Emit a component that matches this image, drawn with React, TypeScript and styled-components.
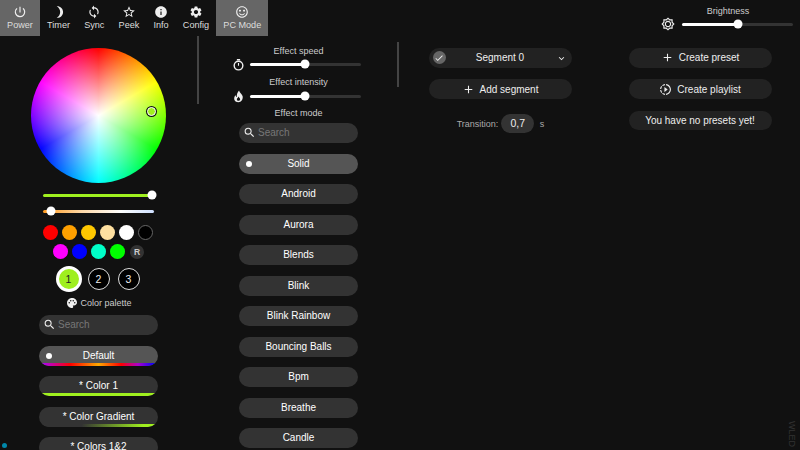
import React from "react";
import styled, { createGlobalStyle } from "styled-components";
import {
  MdPowerSettingsNew, MdStarBorder, MdInfo, MdSettings, MdSentimentSatisfiedAlt, MdOutlineBrightness5,
  MdSearch, MdPalette, MdAdd, MdSlowMotionVideo,
  MdCheck, MdExpandMore, MdSync,
} from "react-icons/md";

const Global = createGlobalStyle`
  html, body { margin: 0; padding: 0; background: #111; }
  body { font-family: "Liberation Sans", Arial, sans-serif; color: #fff; width: 800px; height: 450px; overflow: hidden; }
`;

const Page = styled.div`
  width: 800px; height: 450px; background: #111; overflow: hidden; position: relative;
  display: flex; flex-direction: column;
`;
const TopBar = styled.header`
  height: 36px; flex: none; display: flex; justify-content: space-between;
`;
const Nav = styled.nav`display: flex;`;
const NavButton = styled.button<{ $active?: boolean }>`
  border: 0; margin: 0; padding: 5px 7.1px 0; height: 36px; background: ${p => (p.$active ? "#666" : "transparent")};
  color: #ddd; font: 9.1px "Liberation Sans", Arial, sans-serif;
  display: flex; flex-direction: column; align-items: center; justify-content: flex-start; gap: 1px;
  svg { display: block; width: 14px; height: 14px; color: #eee; }
`;
const BrightnessBox = styled.div`
  width: 132px; margin-right: 7px; padding-top: 5px; display: flex; flex-direction: column; align-items: center;
`;
const Label = styled.div`
  font-size: 9px; line-height: 12px; height: 12px; color: #ccc; text-align: center;
`;
const BrightnessLabel = styled(Label)`margin-left: 2px;`;
const BrightnessRow = styled.div`
  display: flex; align-items: center; margin-top: 2px; height: 10px; width: 132px; justify-content: space-between;
  svg { width: 14px; height: 14px; color: #eee; }
`;
const Track = styled.div<{ $w?: number }>`
  position: relative; width: ${p => p.$w ?? 111}px; height: 3px; border-radius: 2px; background: #333; flex: none;
`;
const Fill = styled.div`
  position: absolute; left: 0; top: 0; bottom: 0; background: #fff; border-radius: 2px;
`;
const Knob = styled.div<{ $d?: number }>`
  position: absolute; top: 50%; width: ${p => p.$d ?? 9}px; height: ${p => p.$d ?? 9}px; border-radius: 50%;
  background: #fff; transform: translate(-50%, -50%);
`;
const Main = styled.main`
  flex: 1; display: grid; grid-template-columns: 197px 203px 200px 200px; min-height: 0;
`;
const Column = styled.section`
  position: relative; display: flex; flex-direction: column; align-items: center; min-height: 0;
`;
const Divider = styled.div<{ $top: number; $h: number; $right: number }>`
  position: absolute; right: ${p => p.$right}px; top: ${p => p.$top}px; height: ${p => p.$h}px; width: 2px; background: #444;
`;
const WheelBox = styled.div`
  margin-top: 11.5px; width: 135px; height: 135px; border-radius: 50%; position: relative; flex: none;
  background:
    radial-gradient(closest-side, #fff, rgba(255,255,255,0)),
    conic-gradient(#f00, #ff0 60deg, #0f0 120deg, #0ff 180deg, #00f 240deg, #f0f 300deg, #f00);
`;
const WheelKnob = styled.div`
  position: absolute; left: 115.5px; top: 59px; width: 7px; height: 7px; border-radius: 50%;
  background: #a0f01f; border: 1px solid #fff; box-shadow: 0 0 0 1px #111;
`;
const ColorSlider = styled.div<{ $mt: number }>`
  margin-top: ${p => p.$mt}px; height: 10px; display: flex; align-items: center; flex: none; margin-left: -1px;
`;
const HueTrack = styled(Track)`background: #a0f01f;`;
const TempTrack = styled(Track)`background: linear-gradient(90deg, #ff9a1e, #ffd9a8 35%, #fff 70%, #cfe0ff);`;
const DotRow = styled.div<{ $mt: number; $shift?: number }>`
  margin-top: ${p => p.$mt}px; margin-left: ${p => p.$shift ?? 0}px; display: flex; gap: 4px; align-items: center; flex: none;
`;
const Dot = styled.div<{ $c: string; $outlined?: boolean }>`
  width: 15px; height: 15px; box-sizing: border-box; border-radius: 50%; background: ${p => p.$c};
  border: ${p => (p.$outlined ? "1px solid #666" : "0")};
`;
const ResetDot = styled.div`
  width: 14px; height: 14px; border-radius: 50%; background: #333; color: #ccc; font-size: 8.5px; font-weight: bold;
  display: flex; align-items: center; justify-content: center; margin-left: 1px;
`;
const SlotRow = styled.div`
  margin-top: 7px; height: 26px; display: flex; align-items: center; gap: 8px; flex: none;
`;
const Slot = styled.div<{ $active?: boolean }>`
  box-sizing: border-box; border-radius: 50%; display: flex; align-items: center; justify-content: center;
  width: ${p => (p.$active ? 26 : 22)}px; height: ${p => (p.$active ? 26 : 22)}px;
  margin: 0 ${p => (p.$active ? -2 : 0)}px;
  border: ${p => (p.$active ? "3px solid #fff" : "1px solid #ddd")};
  background: ${p => (p.$active ? "#9fef1f" : "#000")}; color: ${p => (p.$active ? "#222" : "#eee")};
  font-size: 10.5px;
`;
const PaletteLabel = styled.div`
  margin-top: 5px; margin-left: 1px; height: 12px; display: flex; align-items: center; gap: 2px; font-size: 9px; color: #ccc; flex: none;
  svg { width: 12px; height: 12px; color: #eee; }
`;
const SearchBox = styled.div<{ $mt: number }>`
  margin-top: ${p => p.$mt}px; width: 119px; height: 20px; border-radius: 10px; background: #333; flex: none;
  display: flex; align-items: center; padding: 0 0 1px 4px; box-sizing: border-box; gap: 2px;
  color: #777; font-size: 10px;
  svg { width: 13px; height: 13px; color: #eee; }
`;
const List = styled.div`
  margin-top: 10.5px; display: flex; flex-direction: column; gap: 10.5px; flex: none;
`;
const Pill = styled.div<{ $selected?: boolean }>`
  position: relative; width: 119px; height: 20px; flex: none; border-radius: 10px; overflow: hidden;
  background: ${p => (p.$selected ? "#555" : "#333")}; color: #fff; font-size: 10px; line-height: 20px; text-align: center;
`;
const Strip = styled.div<{ $bg: string }>`
  position: absolute; left: 3px; right: 3px; bottom: 0; height: 3px; background: ${p => p.$bg};
  border-radius: 0 0 10px 10px;
`;
const SelectDot = styled.div`
  position: absolute; left: 7px; top: 7px; width: 6px; height: 6px; border-radius: 50%; background: #fff;
`;
const SliderRow = styled.div<{ $mt: number }>`
  margin-top: ${p => p.$mt}px; margin-left: -6px; height: 10px; display: flex; align-items: center; justify-content: space-between;
  width: 130px; flex: none;
  svg { width: 13px; height: 13px; color: #eee; margin-left: 1px; }
`;
const SpacedLabel = styled(Label)<{ $mt: number }>`margin-top: ${p => p.$mt}px; flex: none;`;
const WideButton = styled.div<{ $mt: number; $h?: number }>`
  margin-top: ${p => p.$mt}px; width: 143px; height: ${p => p.$h ?? 20}px; border-radius: 10px; background: #222; flex: none;
  position: relative; display: flex; align-items: center; justify-content: center; gap: 5px; color: #eee; font-size: 10px;
  svg { width: 13px; height: 13px; color: #eee; }
`;
const CheckBadge = styled.div`
  position: absolute; left: 4px; top: 3.5px; width: 13px; height: 13px; border-radius: 50%; background: #666;
  display: flex; align-items: center; justify-content: center;
  svg { width: 10px; height: 10px; color: #eee; }
`;
const Caret = styled.div`
  position: absolute; right: 5px; top: 5px; display: flex;
  svg { width: 11px; height: 11px; color: #eee; }
`;
const TransitionRow = styled.div`
  margin-top: 15px; margin-left: 1px; display: flex; align-items: center; gap: 3px; height: 19px; font-size: 9px; color: #aaa; flex: none;
`;
const TransitionInput = styled.div`
  width: 33px; height: 19px; border-radius: 10px; background: #333; color: #eee; font-size: 10.5px; line-height: 19px; text-align: center;
`;
const StatusDot = styled.div`
  position: absolute; left: 2px; bottom: 2px; width: 5px; height: 5px; border-radius: 50%; background: #0088aa;
`;
const Watermark = styled.div`
  position: absolute; right: 3px; bottom: 3px; writing-mode: vertical-rl; font-size: 9px; color: #333;
`;

const Moon = () => (
  <svg viewBox="0 0 24 24"><path fill="currentColor" d="M8 2c6.200-.4 11 4 11 10s-4.800 10.400-11 10c3.700-2 6-5.800 6-10S11.700 4 8 2z" /></svg>
);
const Stopwatch = () => (
  <svg viewBox="0 0 24 24">
    <circle cx="12" cy="14" r="8" fill="none" stroke="currentColor" strokeWidth="2.600" />
    <path d="M9 2h6v2.500H9zM11 9h2v5.500h-2z" fill="currentColor" />
  </svg>
);
const Flame = () => (
  <svg viewBox="0 0 24 24">
    <path
      fill="currentColor"
      fillRule="evenodd"
      d="M13 1c1 4 5 6 6.500 10 1.500 5-2 11.500-8 11.500S3 18 4.500 13c.5-1.500 1.500-3 2.500-3.500 0 2 .6 3 1.800 3.500C8.500 8 10 5 13 1zM12 12c-.5 2-3 3-3 5.500 0 1.700 1.300 2.500 3 2.500s3-1 3-2.800c0-2-2-3-3-5.200z"
    />
  </svg>
);

const nav = [
  { t: "Power", i: <MdPowerSettingsNew />, a: true },
  { t: "Timer", i: <Moon /> },
  { t: "Sync", i: <MdSync /> },
  { t: "Peek", i: <MdStarBorder /> },
  { t: "Info", i: <MdInfo /> },
  { t: "Config", i: <MdSettings /> },
  { t: "PC Mode", i: <MdSentimentSatisfiedAlt />, a: true },
];
const effects = ["Android", "Aurora", "Blends", "Blink", "Blink Rainbow", "Bouncing Balls", "Bpm", "Breathe", "Candle"];

export default function App() {
  return (
    <Page>
      <Global />
      <TopBar>
        <Nav>
          {nav.map(n => (
            <NavButton key={n.t} $active={n.a}>{n.i}{n.t}</NavButton>
          ))}
        </Nav>
        <BrightnessBox>
          <BrightnessLabel>Brightness</BrightnessLabel>
          <BrightnessRow>
            <MdOutlineBrightness5 />
            <Track><Fill style={{ width: "50%" }} /><Knob style={{ left: "50%" }} /></Track>
          </BrightnessRow>
        </BrightnessBox>
      </TopBar>
      <Main>
        <Column>
          <Divider $top={0} $h={68} $right={-2} />
          <WheelBox><WheelKnob /></WheelBox>
          <ColorSlider $mt={7.5}><HueTrack><Knob style={{ left: "99%" }} /></HueTrack></ColorSlider>
          <ColorSlider $mt={6}><TempTrack><Knob style={{ left: "7.500%" }} /></TempTrack></ColorSlider>
          <DotRow $mt={8.5} $shift={-0.5}>
            {["#f00", "#ffa000", "#ffc800", "#ffe0a0", "#fff"].map(c => <Dot key={c} $c={c} />)}
            <Dot $c="#000" $outlined />
          </DotRow>
          <DotRow $mt={4.5}>
            {["#f0f", "#00f", "#00ffc8", "#0f0"].map(c => <Dot key={c} $c={c} />)}
            <ResetDot>R</ResetDot>
          </DotRow>
          <SlotRow>
            <Slot $active>1</Slot><Slot>2</Slot><Slot>3</Slot>
          </SlotRow>
          <PaletteLabel><MdPalette />Color palette</PaletteLabel>
          <SearchBox $mt={6}><MdSearch />Search</SearchBox>
          <List>
            <Pill $selected>
              <SelectDot />Default
              <Strip $bg="linear-gradient(90deg,#a0f,#f00 25%,#fa0 50%,#f00 70%,#a0c 85%,#00f)" />
            </Pill>
            <Pill>* Color 1<Strip $bg="#a0f01f" /></Pill>
            <Pill>* Color Gradient<Strip $bg="linear-gradient(90deg,#333 35%,#a0f01f 90%)" /></Pill>
            <Pill>* Colors 1&amp;2</Pill>
          </List>
        </Column>
        <Column>
          <Divider $top={6} $h={45} $right={1} />
          <SpacedLabel $mt={9}>Effect speed</SpacedLabel>
          <SliderRow $mt={2}>
            <Stopwatch />
            <Track><Fill style={{ width: "50%" }} /><Knob style={{ left: "50%" }} /></Track>
          </SliderRow>
          <SpacedLabel $mt={7}>Effect intensity</SpacedLabel>
          <SliderRow $mt={3}>
            <Flame />
            <Track><Fill style={{ width: "50%" }} /><Knob style={{ left: "50%" }} /></Track>
          </SliderRow>
          <SpacedLabel $mt={6}>Effect mode</SpacedLabel>
          <SearchBox $mt={4}><MdSearch />Search</SearchBox>
          <List>
            <Pill $selected><SelectDot />Solid</Pill>
            {effects.map(e => <Pill key={e}>{e}</Pill>)}
          </List>
        </Column>
        <Column>
          <WideButton $mt={11.5}>
            <CheckBadge><MdCheck /></CheckBadge>
            Segment 0
            <Caret><MdExpandMore /></Caret>
          </WideButton>
          <WideButton $mt={11.5}><MdAdd />Add segment</WideButton>
          <TransitionRow>
            Transition:
            <TransitionInput>0,7</TransitionInput>
            <span>&nbsp;s</span>
          </TransitionRow>
        </Column>
        <Column>
          <WideButton $mt={11.5}><MdAdd />Create preset</WideButton>
          <WideButton $mt={11.5}><MdSlowMotionVideo />Create playlist</WideButton>
          <WideButton $mt={11.5} $h={19}>You have no presets yet!</WideButton>
        </Column>
      </Main>
      <StatusDot />
      <Watermark>WLED</Watermark>
    </Page>
  );
}
